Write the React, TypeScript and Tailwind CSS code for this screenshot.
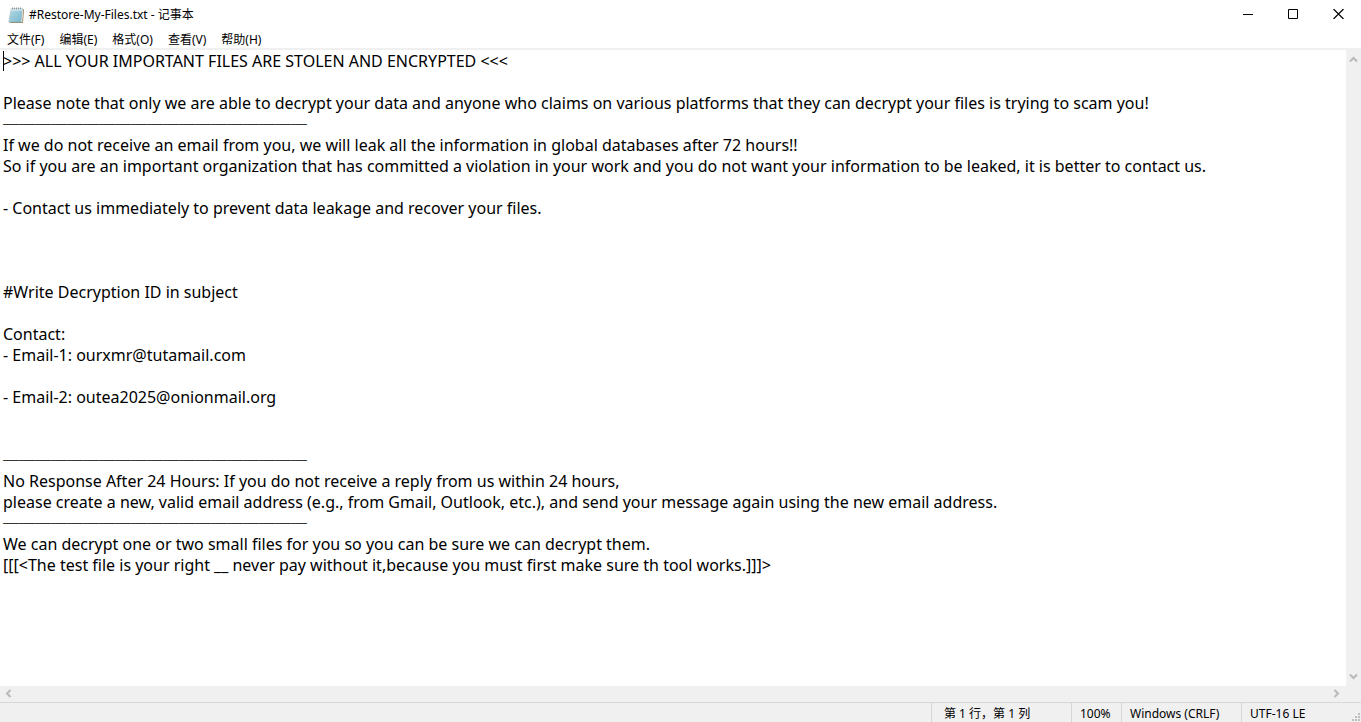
import React, { useState } from 'react';

const RULE = '─'.repeat(19);

const NOTE = [
  '>>> ALL YOUR IMPORTANT FILES ARE STOLEN AND ENCRYPTED <<<',
  '',
  'Please note that only we are able to decrypt your data and anyone who claims on various platforms that they can decrypt your files is trying to scam you!',
  RULE,
  'If we do not receive an email from you, we will leak all the information in global databases after 72 hours!!',
  'So if you are an important organization that has committed a violation in your work and you do not want your information to be leaked, it is better to contact us.',
  '',
  '- Contact us immediately to prevent data leakage and recover your files.',
  '',
  '',
  '',
  '#Write Decryption ID in subject',
  '',
  'Contact:',
  '- Email-1: ourxmr@tutamail.com',
  '',
  '- Email-2: outea2025@onionmail.org',
  '',
  '',
  RULE,
  'No Response After 24 Hours: If you do not receive a reply from us within 24 hours,',
  'please create a new, valid email address (e.g., from Gmail, Outlook, etc.), and send your message again using the new email address.',
  RULE,
  'We can decrypt one or two small files for you so you can be sure we can decrypt them.',
  '[[[<The test file is your right __ never pay without it,because you must first make sure th tool works.]]]>',
].join('\n');

const menus = ['文件(F)', '编辑(E)', '格式(O)', '查看(V)', '帮助(H)'];

const NotepadIcon: React.FC = () => (
  <svg width="17" height="18" viewBox="0 0 17 18" aria-hidden="true">
    <defs>
      <linearGradient id="page" x1="0" y1="0" x2="1" y2="1">
        <stop offset="0" stopColor="#c9e6ee" />
        <stop offset="1" stopColor="#6fb2c9" />
      </linearGradient>
    </defs>
    <path d="M14.5 2.5L16 3.5L15 17H2.5L1 16Z" fill="#9a8562" />
    <path d="M13.8 2.5L15.2 3.2L14.2 16.4L12.8 15.8Z" fill="#f1efe8" />
    <path d="M3.2 2.5H14.3L13 16H0.8Z" fill="url(#page)" stroke="#8fb4c0" strokeWidth="0.5" />
    <path d="M3.2 2.5H14.3L14.1 4.4H2.9Z" fill="#dfebed" />
    <path d="M3 6.5H13.5M2.6 8.5H13.3M2.3 10.5H13.1M1.9 12.5H12.9" stroke="#8cc3d3" strokeWidth="0.6" />
    <path d="M4.5 1.5V3.5M6.5 1.5V3.5M8.5 1.5V3.5M10.5 1.5V3.5M12.5 1.5V3.5" stroke="#7e8e94" strokeWidth="0.9" />
  </svg>
);

interface ChevronProps {
  d: string;
}

const Chevron: React.FC<ChevronProps> = ({ d }) => (
  <svg width="9" height="9" viewBox="0 0 9 9" fill="none" stroke="#b9b9b9" strokeWidth="2" aria-hidden="true">
    <path d={d} />
  </svg>
);

const TitleBar: React.FC = () => (
  <header className="flex h-[30px] shrink-0 items-center justify-between pl-2">
    <div className="flex items-center gap-1">
      <NotepadIcon />
      <h1 className="text-xs">#Restore-My-Files.txt - 记事本</h1>
    </div>
    <div className="flex h-full">
      <button aria-label="最小化" className="flex w-[45px] items-center justify-center pb-0.5 hover:bg-gray-200">
        <svg width="11" height="10" viewBox="0 0 11 10" stroke="#000">
          <path d="M0 5.5H10" />
        </svg>
      </button>
      <button aria-label="最大化" className="flex w-[45px] items-center justify-center pb-0.5 hover:bg-gray-200">
        <svg width="11" height="10" viewBox="0 0 11 10" fill="none" stroke="#000">
          <path d="M0.5 0.5H9.5V9.5H0.5Z" />
        </svg>
      </button>
      <button aria-label="关闭" className="flex w-[45px] items-center justify-center pb-0.5 hover:bg-red-500">
        <svg width="11" height="10" viewBox="0 0 11 10" stroke="#000" strokeWidth="1.2">
          <path d="M0.5 0L10.5 10M10.5 0L0.5 10" />
        </svg>
      </button>
    </div>
  </header>
);

const StatusBar: React.FC = () => (
  <footer className="relative flex h-5 shrink-0 justify-end border-t border-[#d7d7d7] bg-[#f0f0f0] text-xs leading-5">
    <span className="w-[140px] border-l border-[#d7d7d7] pt-px pl-3">第 1 行，第 1 列</span>
    <span className="w-[50px] border-l border-[#d7d7d7] pt-px pl-2">100%</span>
    <span className="w-[120px] border-l border-[#d7d7d7] pt-px pl-2">Windows (CRLF)</span>
    <span className="w-[120px] border-l border-[#d7d7d7] pt-px pl-2">UTF-16 LE</span>
    <svg className="absolute right-0 bottom-0" width="10" height="9" viewBox="0 0 10 9" fill="#bfbfbf" aria-hidden="true">
      <path d="M7 0h2v2h-2zM4 3h2v2h-2zM7 3h2v2h-2zM1 6h2v2h-2zM4 6h2v2h-2zM7 6h2v2h-2z" />
    </svg>
  </footer>
);

const App: React.FC = () => {
  const [text, setText] = useState(NOTE);

  return (
    <div className="flex h-screen flex-col overflow-hidden bg-white font-['Noto_Sans','Noto_Sans_CJK_SC',sans-serif] text-black">
      <TitleBar />
      <nav className="flex h-5 shrink-0 items-center gap-px border-b-2 border-[#f0f0f0] pt-0.5 text-xs">
        {menus.map(menu => (
          <button key={menu} className="px-[7px] hover:bg-sky-100">
            {menu}
          </button>
        ))}
      </nav>

      <div className="flex min-h-0 flex-1">
        <div className="relative flex min-w-0 flex-1">
          <textarea
            aria-label="文本编辑器"
            value={text}
            onChange={e => setText(e.target.value)}
            spellCheck={false}
            wrap="off"
            className="flex-1 resize-none overflow-hidden pt-px pl-[3px] text-base leading-[21px] outline-none"
          />
          <span className="absolute top-px left-[3px] h-5 w-px bg-black" />
        </div>
        <div className="flex w-[15px] flex-col items-center justify-between bg-[#f0f0f0] py-[5px]">
          <button aria-label="向上滚动">
            <Chevron d="M1 6.5L4.5 3L8 6.5" />
          </button>
          <button aria-label="向下滚动">
            <Chevron d="M1 2.5L4.5 6L8 2.5" />
          </button>
        </div>
      </div>

      <div className="flex h-4 shrink-0 items-center justify-between bg-[#f0f0f0] pr-5 pb-0.5 pl-1">
        <button aria-label="向左滚动">
          <Chevron d="M6.5 1L3 4.5L6.5 8" />
        </button>
        <button aria-label="向右滚动">
          <Chevron d="M2.5 1L6 4.5L2.5 8" />
        </button>
      </div>
      <StatusBar />
    </div>
  );
};

export default App;
